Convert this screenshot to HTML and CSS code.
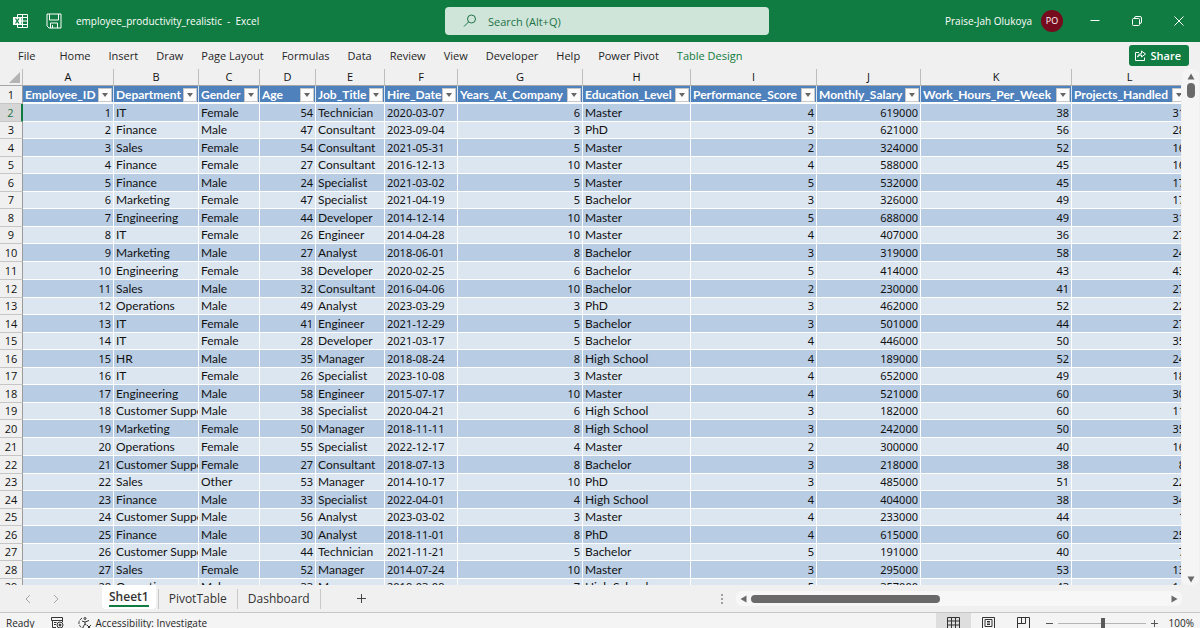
FILE: index.html
```
<!DOCTYPE html>
<html lang="en">
<head>
    <meta charset="UTF-8">
    <meta name="viewport" content="width=device-width, initial-scale=1.0">
    <title>employee_productivity_realistic - Excel</title>
    <link rel="stylesheet" href="styles.css">
</head>
<body>
    <header class="titlebar">
        <svg class="app-icon" width="16" height="16" viewBox="0 0 16 16" fill="none" stroke="#fff">
            <path d="M4.5 4V1.500H14.500V14.500H4.500V12M9.500 1.500V14.500M4.500 4.500H14.500M8 8H14.500M8 11.500H14.500"/>
            <path d="M0 4H8.500V12H0Z" fill="#fff" stroke="none"/>
            <path d="M2.500 5.500L6 10.500M6 5.500L2.500 10.500" stroke="#107c41" stroke-width="1.300"/>
        </svg>
        <button class="icon-button" aria-label="Save">
            <svg width="16" height="16" viewBox="0 0 16 16" fill="none" stroke="#fff">
                <path d="M1 1H15V15H3L1 13ZM3.500 1V7H12.500V1M4.500 15V10H11.500V15M6.500 12V15"/>
            </svg>
        </button>
        <span class="file-name">employee_productivity_realistic&nbsp; -&nbsp; Excel</span>
        <label class="search">
            <svg width="14" height="14" viewBox="0 0 14 14" fill="none" stroke="#217346">
                <circle cx="8.500" cy="5" r="4"/><path d="M5.500 8L1 12.500"/>
            </svg>
            <input type="text" placeholder="Search (Alt+Q)" aria-label="Search">
        </label>
        <div class="title-right">
            <div class="account">
                <span>Praise-Jah Olukoya</span>
                <span class="avatar">PO</span>
            </div>
            <div class="window-buttons">
                <button aria-label="Minimize"><svg width="10" height="10" viewBox="0 0 10 10" stroke="#fff"><path d="M0.500 4.500H9.500"/></svg></button>
                <button aria-label="Restore"><svg width="10" height="10" viewBox="0 0 10 10" stroke="#fff" fill="none"><rect x="0.500" y="2.500" width="7" height="7" rx="1"/><path d="M2.500 2.500V2Q2.500 0.500 4 0.500H8Q9.500 0.500 9.500 2V6Q9.500 7.500 8 7.500H7.500"/></svg></button>
                <button aria-label="Close"><svg width="10" height="10" viewBox="0 0 10 10" stroke="#fff"><path d="M0.500 0.500L9.500 9.500M9.500 0.500L0.500 9.500"/></svg></button>
            </div>
        </div>
    </header>

    <nav class="ribbon">
        <a class="file-tab" href="#">File</a>
        <a href="#">Home</a>
        <a href="#">Insert</a>
        <a href="#">Draw</a>
        <a href="#">Page Layout</a>
        <a href="#">Formulas</a>
        <a href="#">Data</a>
        <a href="#">Review</a>
        <a href="#">View</a>
        <a href="#">Developer</a>
        <a href="#">Help</a>
        <a href="#">Power Pivot</a>
        <a class="active" href="#">Table Design</a>
        <button class="share">
            <svg width="11" height="11" viewBox="0 0 11 11" fill="none" stroke="#fff">
                <path d="M4 2.500H0.500V10.500H9.500V7.500M2.500 7Q3 3.500 6.500 3.500V1L10.500 4L6.500 7V5Q4 5 2.500 7Z"/>
            </svg>
            Share
        </button>
    </nav>

    <main class="workspace">
        <div class="grid">
            <table>
                <colgroup>
                    <col class="w-row"><col class="w-a"><col class="w-b"><col class="w-c"><col class="w-d"><col class="w-e"><col class="w-f">
                    <col class="w-g"><col class="w-h"><col class="w-i"><col class="w-j"><col class="w-k"><col class="w-l">
                </colgroup>
                <thead>
                    <tr class="letters">
                        <th class="corner"><svg width="11" height="11" viewBox="0 0 11 11"><path d="M11 0V11H0Z" fill="#b4b4b4"/></svg></th>
                        <th>A</th><th>B</th><th>C</th><th>D</th><th>E</th><th>F</th><th>G</th><th>H</th><th>I</th><th>J</th><th>K</th><th>L</th>
                    </tr>
                    <tr class="names" id="names"><th class="row-number">1</th></tr>
                </thead>
                <tbody id="rows"></tbody>
            </table>
        </div>
        <div class="v-scroll">
            <svg width="8" height="7" viewBox="0 0 8 7"><path d="M4 0.500L7.500 6.500H0.500Z" fill="#6a6a6a"/></svg>
            <div class="v-thumb"></div>
            <svg class="down" width="8" height="7" viewBox="0 0 8 7"><path d="M4 6.500L7.500 0.500H0.500Z" fill="#6a6a6a"/></svg>
        </div>
    </main>

    <div class="sheetbar">
        <div class="sheet-nav">
            <button aria-label="Previous sheet"><svg width="6" height="10" viewBox="0 0 6 10" fill="none" stroke="#a6a6a6"><path d="M5 1L1 5L5 9"/></svg></button>
            <button aria-label="Next sheet"><svg width="6" height="10" viewBox="0 0 6 10" fill="none" stroke="#a6a6a6"><path d="M1 1L5 5L1 9"/></svg></button>
        </div>
        <button class="sheet current"><span>Sheet1</span></button>
        <button class="sheet pivot">PivotTable</button>
        <button class="sheet">Dashboard</button>
        <button class="add-sheet" aria-label="New sheet"><svg width="9" height="9" viewBox="0 0 9 9" stroke="#444"><path d="M4.500 0V9M0 4.500H9"/></svg></button>
        <svg class="dots" width="2" height="10" viewBox="0 0 2 10" fill="#a0a0a0"><path d="M0 0H2V2H0ZM0 4H2V6H0ZM0 8H2V10H0Z"/></svg>
        <div class="h-scroll">
            <svg width="7" height="8" viewBox="0 0 7 8"><path d="M0.500 4L6.500 0.500V7.500Z" fill="#6a6a6a"/></svg>
            <div class="h-track"><div class="h-thumb"></div></div>
            <svg width="7" height="8" viewBox="0 0 7 8"><path d="M6.500 4L0.500 0.500V7.500Z" fill="#6a6a6a"/></svg>
        </div>
    </div>

    <footer class="statusbar">
        <span class="ready">Ready</span>
        <button class="macro" aria-label="Record macro">
            <svg width="13" height="12" viewBox="0 0 13 12" fill="none" stroke="#333">
                <path d="M5 10.500H1.500V3M11.500 5V0.500H0.500V3.500H12M3 5.500H5.500M3 7.500H5"/><circle cx="9" cy="8" r="3"/><circle cx="9" cy="8" r="1" fill="#333"/>
            </svg>
        </button>
        <button class="access">
            <svg width="14" height="13" viewBox="0 0 14 13" fill="none" stroke="#333">
                <path d="M4 1Q-1 5 2 9Q3 11 6 11" stroke-dasharray="3 1"/><circle cx="7" cy="1.500" r="1"/>
                <path d="M4 4L7 5L11 3.500M7 5V7L5 10M7 7L8.500 8M9 8L13 12M13 8L9 12"/>
            </svg>
            Accessibility: Investigate
        </button>
        <div class="views">
            <button class="selected" aria-label="Normal view"><svg width="13" height="12" viewBox="0 0 13 12" fill="none" stroke="#333"><path d="M0.500 0.500H12.500V11.500H0.500ZM0.500 4H12.500M0.500 8H12.500M4.500 0V12M8.500 0V12"/></svg></button>
            <button aria-label="Page layout view"><svg width="13" height="12" viewBox="0 0 13 12" fill="none" stroke="#333"><path d="M0.500 0.500H12.500V11.500H0.500ZM3 2.500H10V9.500H3ZM5 4.500H8M5 6H8M5 7.500H8"/></svg></button>
            <button aria-label="Page break view"><svg width="13" height="12" viewBox="0 0 13 12" fill="none" stroke="#333"><path d="M0.500 0.500H12.500V11.500H0.500ZM0.500 6.500H8.500V0.500M4.500 0.500V6.500"/></svg></button>
        </div>
        <div class="zoom">
            <button aria-label="Zoom out"><svg width="7" height="7" viewBox="0 0 7 7" stroke="#555"><path d="M0 3.500H7"/></svg></button>
            <input type="range" min="0" max="200" value="103" aria-label="Zoom">
            <button aria-label="Zoom in"><svg width="7" height="7" viewBox="0 0 7 7" stroke="#555"><path d="M0 3.500H7M3.500 0V7"/></svg></button>
            <span>100%</span>
        </div>
    </footer>

    <script>
        const names = ['Employee_ID','Department','Gender','Age','Job_Title','Hire_Date','Years_At_Company',
            'Education_Level','Performance_Score','Monthly_Salary','Work_Hours_Per_Week','Projects_Handled'];

        const employees = [
            [1,'IT','Female',54,'Technician','2020-03-07',6,'Master',4,619000,38,31],
            [2,'Finance','Male',47,'Consultant','2023-09-04',3,'PhD',3,621000,56,28],
            [3,'Sales','Female',54,'Consultant','2021-05-31',5,'Master',2,324000,52,16],
            [4,'Finance','Female',27,'Consultant','2016-12-13',10,'Master',4,588000,45,16],
            [5,'Finance','Male',24,'Specialist','2021-03-02',5,'Master',5,532000,45,17],
            [6,'Marketing','Female',47,'Specialist','2021-04-19',5,'Bachelor',3,326000,49,17],
            [7,'Engineering','Female',44,'Developer','2014-12-14',10,'Master',5,688000,49,31],
            [8,'IT','Female',26,'Engineer','2014-04-28',10,'Master',4,407000,36,27],
            [9,'Marketing','Male',27,'Analyst','2018-06-01',8,'Bachelor',3,319000,58,24],
            [10,'Engineering','Female',38,'Developer','2020-02-25',6,'Bachelor',5,414000,43,43],
            [11,'Sales','Male',32,'Consultant','2016-04-06',10,'Bachelor',2,230000,41,27],
            [12,'Operations','Male',49,'Analyst','2023-03-29',3,'PhD',3,462000,52,22],
            [13,'IT','Female',41,'Engineer','2021-12-29',5,'Bachelor',3,501000,44,27],
            [14,'IT','Female',28,'Developer','2021-03-17',5,'Bachelor',4,446000,50,35],
            [15,'HR','Male',35,'Manager','2018-08-24',8,'High School',4,189000,52,24],
            [16,'IT','Female',26,'Specialist','2023-10-08',3,'Master',4,652000,49,18],
            [17,'Engineering','Male',58,'Engineer','2015-07-17',10,'Master',4,521000,60,30],
            [18,'Customer Support','Male',38,'Specialist','2020-04-21',6,'High School',3,182000,60,11],
            [19,'Marketing','Female',50,'Manager','2018-11-11',8,'High School',3,242000,50,35],
            [20,'Operations','Female',55,'Specialist','2022-12-17',4,'Master',2,300000,40,16],
            [21,'Customer Support','Female',27,'Consultant','2018-07-13',8,'Bachelor',3,218000,38,8],
            [22,'Sales','Other',53,'Manager','2014-10-17',10,'PhD',3,485000,51,22],
            [23,'Finance','Male',33,'Specialist','2022-04-01',4,'High School',4,404000,38,34],
            [24,'Customer Support','Male',56,'Analyst','2023-03-02',3,'Master',4,233000,44,1],
            [25,'Finance','Male',30,'Analyst','2018-11-01',8,'PhD',4,615000,60,25],
            [26,'Customer Support','Male',44,'Technician','2021-11-21',5,'Bachelor',5,191000,40,7],
            [27,'Sales','Female',52,'Manager','2014-07-24',10,'Master',3,295000,53,13],
            [28,'Operations','Male',33,'Manager','2019-03-09',7,'High School',5,357000,43,14]
        ];

        const namesRow = document.getElementById('names');
        const rows = document.getElementById('rows');

        names.forEach(name => {
            const th = document.createElement('th');
            th.innerHTML = `<div class="name-cell"><span>${name}</span><button aria-label="Filter ${name}"></button></div>`;
            namesRow.appendChild(th);
        });

        employees.forEach((employee, index) => {
            const tr = document.createElement('tr');
            tr.innerHTML = `<th class="row-number">${index + 2}</th>`;
            employee.forEach((value, column) => {
                const td = document.createElement('td');
                td.textContent = value;
                if (typeof value === 'number') td.classList.add('number');
                if (column === 5) td.classList.add('date');
                tr.appendChild(td);
            });
            rows.appendChild(tr);
        });
    </script>
</body>
</html>
```
FILE: styles.css
```
*{
    margin: 0;
    padding: 0;
    box-sizing: border-box;
}

body{
    height: 100vh;
    display: flex;
    flex-direction: column;
    overflow: hidden;
    background-color: #f0f0f0;
    color: #262626;
    font-family: "Open Sans", "Noto Sans", sans-serif;
    font-size: 11px;
}

button, input{
    font: inherit;
    color: inherit;
    border: none;
    background: none;
}

button{
    cursor: pointer;
}

svg{
    display: block;
    flex-shrink: 0;
}

a{
    color: inherit;
    text-decoration: none;
}

/* title bar */
.titlebar{
    height: 42px;
    flex-shrink: 0;
    display: grid;
    grid-template-columns: 16px 16px 400fr 324px 415fr;
    align-items: center;
    padding: 0 16px 0 13px;
    background-color: #107c41;
    color: #fff;
}

.titlebar .icon-button{
    margin-left: 17px;
}

.file-name{
    margin-left: 31px;
    font-size: 10px;
    white-space: nowrap;
}

.search{
    height: 28px;
    display: flex;
    align-items: center;
    gap: 11px;
    padding-left: 18px;
    border-radius: 4px;
    background-color: #cfe5d9;
    color: #217346;
}

.search input{
    flex: 1;
    outline: none;
}

.search input::placeholder{
    color: #217346;
}

.title-right{
    display: flex;
    align-items: center;
    justify-content: flex-end;
}

.account{
    display: flex;
    align-items: center;
    gap: 9px;
    font-size: 10px;
    white-space: nowrap;
}

.avatar{
    width: 22px;
    height: 22px;
    border-radius: 50%;
    background-color: #750b1c;
    font-size: 9px;
    line-height: 22px;
    text-align: center;
}

.window-buttons{
    display: flex;
    gap: 32px;
    margin-left: 27px;
}

/* ribbon */
.ribbon{
    height: 27px;
    flex-shrink: 0;
    display: flex;
    align-items: center;
    gap: 18px;
    padding: 0 11px 0 18px;
    white-space: nowrap;
}

.ribbon .file-tab{
    margin-right: 6px;
}

.ribbon .active{
    color: #107c41;
}

.share{
    height: 21px;
    display: flex;
    align-items: center;
    gap: 4px;
    margin-left: auto;
    padding: 0 8px 0 6px;
    border-radius: 3px;
    background-color: #107c41;
    color: #fff;
    font-weight: 600;
}

/* sheet */
.workspace{
    flex: 1;
    min-height: 0;
    display: flex;
}

.grid{
    flex: 1;
    min-width: 0;
    overflow: hidden;
}

table{
    width: 1188px;
    table-layout: fixed;
    border-collapse: separate;
    border-spacing: 0;
    color: #111;
}

.w-row{ width: 23px; }
.w-a{ width: 91px; }
.w-b{ width: 85px; }
.w-c{ width: 61px; }
.w-d{ width: 56px; }
.w-e{ width: 69px; }
.w-f{ width: 73px; }
.w-g{ width: 125px; }
.w-h{ width: 108px; }
.w-i{ width: 126px; }
.w-j{ width: 104px; }
.w-k{ width: 151px; }
.w-l{ width: 116px; }

th, td{
    overflow: hidden;
    white-space: nowrap;
    line-height: 16px;
}

.letters th{
    height: 17px;
    border-right: 1px solid #bdbdbd;
    border-bottom: 1px solid #a6a6a6;
    font-weight: normal;
}

.letters .corner{
    padding-left: 9px;
}

.row-number{
    border-right: 1px solid #9b9b9b;
    border-bottom: 1px solid #c6c6c6;
    font-weight: normal;
    text-align: center;
}

.names th{
    height: 18px;
}

.names th:not(.row-number){
    background-color: #4f81bd;
    border-right: 1px solid #dce6f1;
    border-bottom: 2px solid #fff;
    color: #fff;
}

.name-cell{
    height: 16px;
    display: flex;
    align-items: center;
    justify-content: space-between;
    padding: 1px 1px 0 2px;
    font-family: Lato, sans-serif;
    font-size: 12px;
}

.name-cell span{
    flex: 1;
    min-width: 0;
    overflow: hidden;
    text-align: left;
}

.name-cell button{
    width: 14px;
    height: 14px;
    flex-shrink: 0;
    display: flex;
    align-items: center;
    justify-content: center;
    border: 1px solid #c8c8c8;
    background-color: #fcfcfc;
}

.name-cell button::after{
    content: "";
    border: 3px solid transparent;
    border-top: 4px solid #666;
    border-bottom: none;
}

tbody tr{
    height: 17px;
    background-color: #dce6f1;
}

tbody tr:nth-child(odd){
    height: 18px;
    background-color: #b8cce4;
}

tbody tr:nth-child(10n){
    height: 18px;
}

tbody .row-number{
    background-color: #f0f0f0;
}

tbody tr:first-child .row-number{
    border-right: 2px solid #107c41;
    background-color: #d6d6d6;
    color: #217346;
}

td{
    padding: 0 2px;
    border-right: 1px solid #fff;
    border-bottom: 1px solid #fff;
    font-family: Lato, sans-serif;
    font-size: 12px;
}

td.number, td.date{
    font-family: "Noto Sans", sans-serif;
    font-size: 11px;
}

td.number{
    text-align: right;
}

.v-scroll{
    width: 17px;
    margin: 0 1px;
    padding: 4px 0 2px;
    display: flex;
    flex-direction: column;
    align-items: center;
    gap: 3px;
    border-radius: 6px;
    background-color: #f5f5f5;
}

.v-thumb{
    width: 8px;
    height: 15px;
    border-radius: 4px;
    background-color: #6a6a6a;
}

.v-scroll .down{
    margin-top: auto;
}

/* sheet tabs */
.sheetbar{
    height: 28px;
    flex-shrink: 0;
    display: flex;
    align-items: center;
    border-bottom: 1px solid #c6c6c6;
    font-size: 12px;
}

.sheet-nav{
    width: 102px;
    display: flex;
    gap: 22px;
    padding-left: 25px;
}

.sheet{
    height: 20px;
    padding: 0 10px;
    border-right: 1px solid #c8c8c8;
    color: #333;
}

.sheet.pivot{
    border-left: 1px solid #c8c8c8;
}

.sheet.current{
    height: 24px;
    align-self: flex-start;
    margin-right: 2px;
    padding: 0 7px;
    border: none;
    border-radius: 0 0 4px 4px;
    background-color: #fff;
    font-weight: 600;
}

.sheet.current span{
    display: block;
    line-height: 17px;
    border-bottom: 2px solid #107c41;
}

.add-sheet{
    margin-left: 36px;
}

.dots{
    margin-left: auto;
}

.h-scroll{
    width: 446px;
    height: 15px;
    display: flex;
    align-items: center;
    gap: 4px;
    margin: 0 18px 0 13px;
    padding: 0 4px;
    border-radius: 6px;
    background-color: #f7f7f7;
}

.h-track{
    flex: 1;
}

.h-thumb{
    width: 189px;
    height: 8px;
    border-radius: 4px;
    background-color: #6a6a6a;
}

/* status bar */
.statusbar{
    height: 15px;
    flex-shrink: 0;
    display: flex;
    align-items: flex-start;
    background-color: #f4f4f4;
    font-size: 10px;
    line-height: 20px;
    white-space: nowrap;
}

.statusbar > *, .views button, .zoom button{
    height: 20px;
    display: flex;
    align-items: center;
}

.ready{
    padding-left: 6px;
}

.macro{
    margin-left: 17px;
}

.access{
    gap: 3px;
    margin-left: 14px;
}

.views{
    margin-left: auto;
}

.views button{
    width: 35px;
    justify-content: center;
}

.views .selected{
    background-color: #dedede;
}

.zoom{
    gap: 5px;
    padding: 0 6px 0 5px;
}

.zoom input{
    width: 88px;
    height: 20px;
    appearance: none;
}

.zoom input::-webkit-slider-runnable-track{
    height: 1px;
    background-color: #b5b5b5;
}

.zoom input::-webkit-slider-thumb{
    width: 4px;
    height: 10px;
    margin-top: -5px;
    appearance: none;
    background-color: #5a5a5a;
}

.zoom span{
    padding-left: 6px;
}
```
